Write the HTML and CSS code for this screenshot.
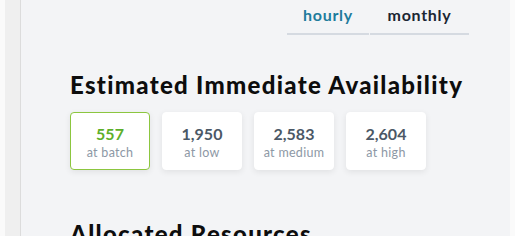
FILE: index.html
```html
<!DOCTYPE html>
<html lang="en">
<head>
  <meta charset="UTF-8" />
  <title>Availability</title>
  <link rel="stylesheet" href="styles.css">
</head>
<body>
  <div class="shell">
    <div class="sidebar"></div>
    <div class="main">
      <div class="tabs">
        <div class="tab active">hourly</div>
        <div class="tab">monthly</div>
      </div>

      <h2>Estimated Immediate Availability</h2>
      <div class="stats">
        <div class="stat selected">
          <div class="num">557</div>
          <div class="label">at batch</div>
        </div>
        <div class="stat">
          <div class="num">1,950</div>
          <div class="label">at low</div>
        </div>
        <div class="stat">
          <div class="num">2,583</div>
          <div class="label">at medium</div>
        </div>
        <div class="stat">
          <div class="num">2,604</div>
          <div class="label">at high</div>
        </div>
      </div>

      <h2 class="next">Allocated Resources</h2>
    </div>
  </div>
</body>
</html>
```

FILE: styles.css
```css
body {
  margin: 0;
  padding: 0 5px;
  background: #fafafa;
  font-family: Lato, "Open Sans", sans-serif;
  overflow: hidden;
}

.shell {
  display: flex;
  height: 236px;
  overflow: hidden;
}

.sidebar {
  width: 15px;
  background: #efefef;
  border-right: 1px solid #dcdcdc;
  box-shadow: 1px 0 0 #fff;
}

.main {
  flex: 1;
  background: #f3f4f6;
  padding: 0 0 0 49px;
}

.tabs {
  display: flex;
  justify-content: flex-end;
  padding-right: 41px;
}

.tab {
  font-size: 16px;
  font-weight: 700;
  letter-spacing: 0.7px;
  color: #1b2633;
  text-align: center;
  padding: 5px 0 9px;
  border-bottom: 2px solid #d5dae1;
  width: 99px;
}

.tab.active {
  color: #1e7c9c;
  width: 82px;
  margin-right: 1px;
}

h2 {
  margin: 35px 0 13px;
  font-size: 24px;
  font-weight: 900;
  letter-spacing: 1.3px;
  color: #0d0d0d;
}

.stats {
  display: flex;
  gap: 12px;
}

.stat {
  width: 80px;
  height: 58px;
  box-sizing: border-box;
  background: #fff;
  border: 1px solid #fff;
  border-radius: 4px;
  box-shadow: 0 2px 6px rgba(0, 0, 0, 0.08);
  text-align: center;
  padding-top: 12px;
}

.stat.selected {
  border-color: #8cc63f;
}

.num {
  font-size: 16px;
  font-weight: 700;
  color: #4b5866;
  line-height: 18px;
}

.selected .num {
  color: #5daf2a;
}

.label {
  font-size: 12.5px;
  letter-spacing: 0.3px;
  color: #8d98a5;
  margin-top: 2px;
}

h2.next {
  margin-top: 49px;
}
```
